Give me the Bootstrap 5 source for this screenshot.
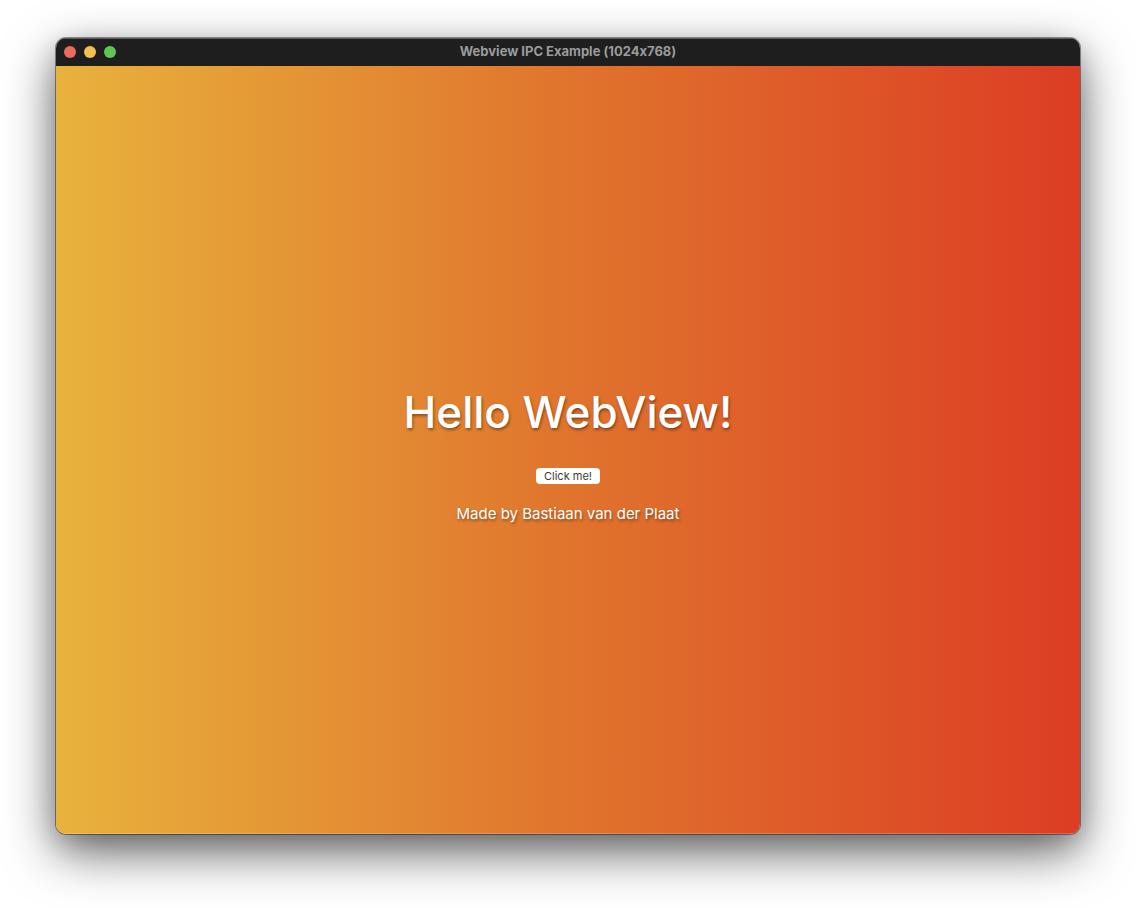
<!DOCTYPE html>
<html lang="en">
<head>
<meta charset="utf-8">
<meta name="viewport" content="width=device-width, initial-scale=1">
<title>Webview IPC Example</title>
<link rel="stylesheet" href="https://cdn.jsdelivr.net/npm/bootstrap@5.3.0/dist/css/bootstrap.min.css">
<style>
body{font-family:Inter,"Liberation Sans",sans-serif;font-feature-settings:"calt" 0;background:#fff}
.desktop{padding:38px 56px 74px}
.app-window{border-radius:10px;box-shadow:0 0 0 1px rgba(0,0,0,.4),0 18px 50px rgba(0,0,0,.6),0 8px 24px rgba(0,0,0,.15)}
.titlebar{height:28px;background:#1e1e1e;padding:0 8px;box-shadow:inset 0 1px 0 #5b5b5b}
.traffic{width:100px}
.traffic button{width:12px;height:12px}
.close-dot{background:#ed6a5e}.min-dot{background:#f5bf4f}.max-dot{background:#61c554}
.window-title{font-size:13px;font-weight:700;color:#9b9b9b}
.view{background:linear-gradient(to right,#e8b23c,#e0742d 50%,#dc3d24);color:#fff;padding-top:8px;text-shadow:1px 2px 3px rgba(0,0,0,.4);box-shadow:inset 0 -1px 0 rgba(255,255,255,.2)}
.headline{font-size:44px;line-height:56px;font-weight:500;margin:0 0 28px}
.click-btn{font-size:11px;line-height:16px;height:16px;border-radius:4px;background:#fff;color:#3c3c3c;padding:0 8px}
.credit{font-size:15px;line-height:20px;margin:20px 0 0}
</style>
<script src="https://cdn.jsdelivr.net/npm/bootstrap@5.3.0/dist/js/bootstrap.bundle.min.js"></script>
</head>
<body>
<div class="desktop d-flex flex-column vh-100">
<main class="app-window d-flex flex-column flex-grow-1 overflow-hidden">
<header class="titlebar d-flex align-items-center justify-content-between">
<div class="traffic d-flex gap-2">
<button type="button" class="close-dot border-0 rounded-circle p-0" aria-label="Close"></button>
<button type="button" class="min-dot border-0 rounded-circle p-0" aria-label="Minimize"></button>
<button type="button" class="max-dot border-0 rounded-circle p-0" aria-label="Zoom"></button>
</div>
<div class="window-title">Webview IPC Example (1024x768)</div>
<div class="traffic"></div>
</header>
<section class="view flex-grow-1 d-flex flex-column align-items-center justify-content-center">
<h1 class="headline">Hello WebView!</h1>
<button type="button" class="click-btn border-0">Click me!</button>
<p class="credit">Made by Bastiaan van der Plaat</p>
</section>
</main>
</div>
</body>
</html>
